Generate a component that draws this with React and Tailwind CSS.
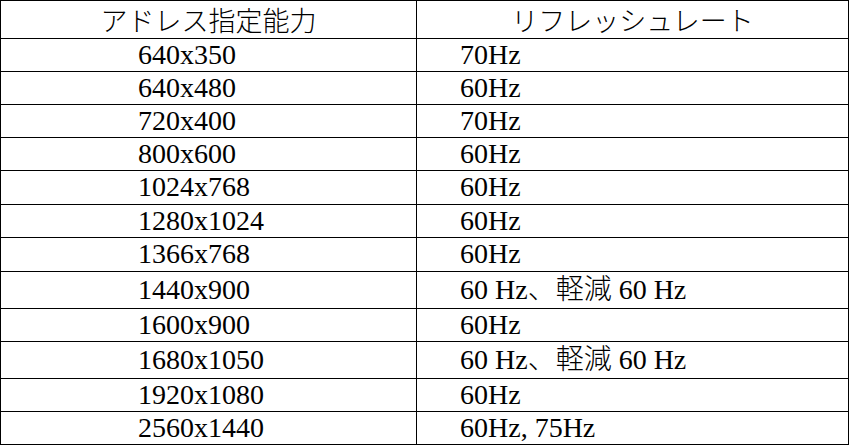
import React from 'react';

const rows = [
  { res: '640x350', rate: '70Hz', h: 'h-[33px]' },
  { res: '640x480', rate: '60Hz', h: 'h-[33px]' },
  { res: '720x400', rate: '70Hz', h: 'h-[33px]' },
  { res: '800x600', rate: '60Hz', h: 'h-[33px]' },
  { res: '1024x768', rate: '60Hz', h: 'h-[34px]' },
  { res: '1280x1024', rate: '60Hz', h: 'h-[33px]' },
  { res: '1366x768', rate: '60Hz', h: 'h-[34px]' },
  { res: '1440x900', rate: '60 Hz、軽減 60 Hz', h: 'h-[37px]', cjk: true },
  { res: '1600x900', rate: '60Hz', h: 'h-[33px]' },
  { res: '1680x1050', rate: '60 Hz、軽減 60 Hz', h: 'h-[37px]', cjk: true },
  { res: '1920x1080', rate: '60Hz', h: 'h-[33px]' },
  { res: '2560x1440', rate: '60Hz, 75Hz', h: 'h-[33px]' },
];

export default function App() {
  return (
    <div className="w-[850px] h-[446px] bg-white overflow-hidden font-['Liberation_Serif','Noto_Sans_CJK_JP',serif] text-black">
      <div className="w-[849px] border-l border-t border-black">
        {/* Header */}
        <div className="flex h-[38px] text-[27px] font-['Noto_Sans_CJK_JP',sans-serif] font-light leading-none">
          <div className="w-[416px] border-r border-b border-black flex items-center justify-center">
            アドレス指定能力
          </div>
          <div className="flex-1 border-r border-b border-black flex items-center justify-center">
            リフレッシュレート
          </div>
        </div>

        {/* Rows */}
        {rows.map((r) => (
          <div key={r.res} className={`flex ${r.h} text-[28px] leading-[32px]`}>
            <div className={`w-[416px] border-r border-b border-black pl-[137px] ${r.cjk ? 'pt-[2px]' : ''}`}>
              {r.res}
            </div>
            <div className={`flex-1 border-r border-b border-black pl-[43px] whitespace-nowrap ${r.cjk ? 'pt-[2px] font-light' : ''}`}>
              {r.rate}
            </div>
          </div>
        ))}
      </div>
    </div>
  );
}
